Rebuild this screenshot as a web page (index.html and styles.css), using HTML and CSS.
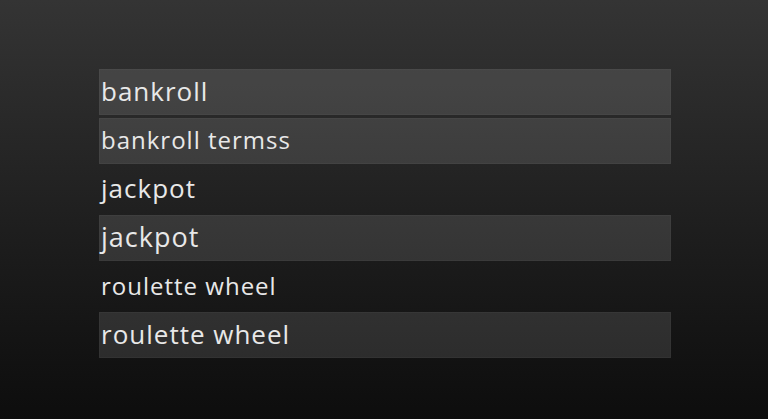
FILE: index.html
```html
<!DOCTYPE html>
<html lang="en">
<head>
    <meta charset="UTF-8">
    <title>Glossary</title>
    <link rel="stylesheet" href="styles.css">
</head>
<body>
    <ul class="term-list">
        <li class="term shaded big">bankroll</li>
        <li class="term shaded">bankroll termss</li>
        <li class="term big">jackpot</li>
        <li class="term shaded bigger">jackpot</li>
        <li class="term">roulette wheel</li>
        <li class="term shaded big">roulette wheel</li>
    </ul>
</body>
</html>
```

FILE: styles.css
```css
html, body {
    height: 100%;
}
body {
    margin: 0;
    background: linear-gradient(to bottom, #343434 0%, #2a2a2a 25%, #1a1a1a 65%, #0d0d0d 100%);
    font-family: "Open Sans", "Noto Sans", sans-serif;
    color: #e8e8e8;
    overflow: hidden;
}
.term-list {
    list-style: none;
    margin: 0;
    padding: 69px 0 0 99px;
    width: 572px;
    display: flex;
    flex-direction: column;
    gap: 2.6px;
}
.term {
    height: 46px;
    box-sizing: border-box;
    display: flex;
    align-items: center;
    padding: 0 0 2px 2px;
    font-size: 24px;
    letter-spacing: 1px;
}
.term.big {
    font-size: 26px;
}
.term.bigger {
    font-size: 27px;
}
.shaded {
    background-color: rgba(255, 255, 255, 0.115);
    border: 1px solid rgba(255, 255, 255, 0.03);
    padding-left: 1px;
}
```
